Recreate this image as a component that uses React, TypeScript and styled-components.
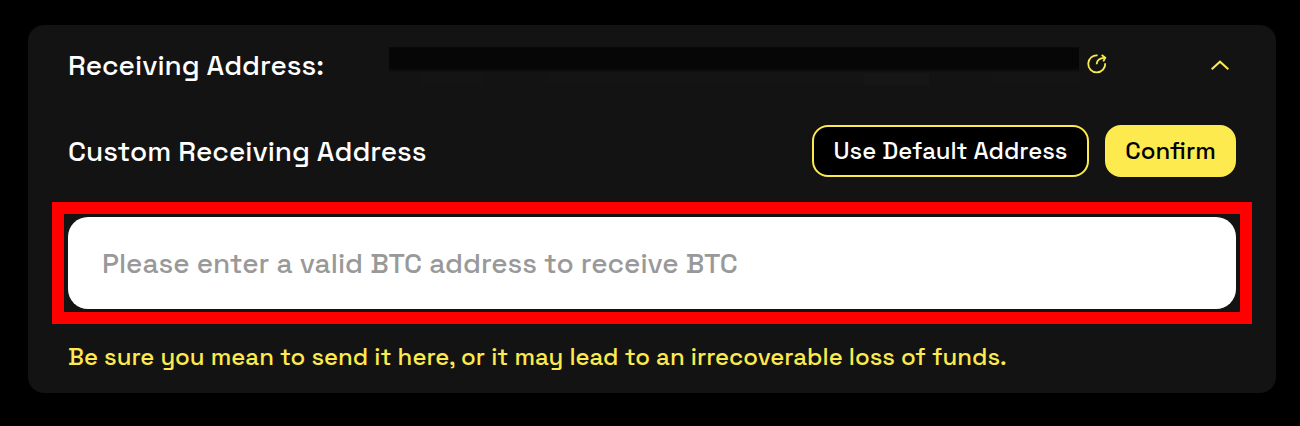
import React from "react";
import styled, { createGlobalStyle } from "styled-components";

const yellow = "#fcea4e";

const GlobalStyle = createGlobalStyle`
  *, *::before, *::after { box-sizing: border-box; }
  body {
    margin: 0;
    background: #000;
    font-family: "Space Grotesk", Inter, sans-serif;
    font-weight: 500;
  }
`;

const Page = styled.main`
  height: 426px;
  padding: 25px 24px 33px 28px;
  background: #000;
`;

const Panel = styled.section`
  height: 368px;
  padding: 0 40px;
  border-radius: 16px;
  background: #131313;
  color: #fff;
`;

const HeaderRow = styled.header`
  display: flex;
  height: 80px;
`;

const Title = styled.div<{ $width?: number }>`
  width: ${(p) => (p.$width ? `${p.$width}px` : "auto")};
  flex: none;
  align-self: center;
  font-size: 28px;
  line-height: 36px;
  white-space: nowrap;
`;

const HiddenAddress = styled.div`
  width: 690px;
  margin-top: 22px;
`;

const Mask = styled.div`
  height: 26px;
  background: linear-gradient(#0c0c0c 0, #060606 1px, #060606 21px, #0b0b0b 23px, #131313 25px);
`;

const Residue = styled.div`
  display: flex;
  height: 12px;
`;

const Patch = styled.span<{ $width: number; $color?: string }>`
  width: ${(p) => p.$width}px;
  background: ${(p) => p.$color ?? "transparent"};
`;

const LinkIcon = styled.svg`
  width: 22px;
  height: 22px;
  margin: 28px 0 0 7px;
`;

const Chevron = styled.svg`
  width: 20px;
  height: 12px;
  margin: 34px 6px 0 auto;
`;

const ActionRow = styled.div`
  display: flex;
  align-items: center;
  justify-content: space-between;
  height: 52px;
  margin-top: 20px;
`;

const Actions = styled.div`
  display: flex;
  gap: 16px;
`;

const Button = styled.button<{ $primary?: boolean; $width: number }>`
  width: ${(p) => p.$width}px;
  height: 52px;
  padding: 0;
  border: 2px solid ${yellow};
  border-radius: 16px;
  background: ${(p) => (p.$primary ? yellow : "#000")};
  color: ${(p) => (p.$primary ? "#000" : "#fff")};
  font: 500 24px/30px "Space Grotesk", Inter, sans-serif;
  white-space: nowrap;
`;

const Highlight = styled.div`
  margin: 25px -16px 0;
  padding: 3px 4px;
  border: 12px solid #f00;
`;

const AddressInput = styled.input`
  display: block;
  width: 100%;
  height: 92px;
  padding: 0 34px;
  border: 0;
  border-radius: 20px;
  background: #fff;
  color: #131313;
  font: 500 28px/36px "Space Grotesk", Inter, sans-serif;
  outline: none;

  &::placeholder {
    color: #999;
    opacity: 1;
  }
`;

const Warning = styled.p`
  margin: 17px 0 0;
  color: ${yellow};
  font-size: 24px;
  line-height: 32px;
  white-space: nowrap;
`;

export default function App() {
  return (
    <>
      <GlobalStyle />
      <Page>
        <Panel>
          <HeaderRow>
            <Title $width={321}>Receiving Address:</Title>
            <HiddenAddress>
              <Mask />
              <Residue>
                <Patch $width={32} />
                <Patch $width={63} $color="#141414" />
                <Patch $width={62} />
                <Patch $width={318} $color="#141414" />
                <Patch $width={65} $color="#161616" />
                <Patch $width={62} />
                <Patch $width={88} $color="#141414" />
              </Residue>
            </HiddenAddress>
            <LinkIcon viewBox="0 0 22 22" fill="none" stroke={yellow} strokeWidth="1.8">
              <path d="M11.6 2.4A8.5 8.5 0 1 0 19.2 10.2" />
              <path d="M10.6 11.2C10.8 7.8 13.2 5.2 18.6 4.9" />
              <path d="M15.7 2L19.3 4.8L17.3 8.4" />
            </LinkIcon>
            <Chevron viewBox="0 0 20 12" fill="none" stroke={yellow} strokeWidth="2">
              <path d="M1.7 10.3L10 2.7L18.3 10.3" />
            </Chevron>
          </HeaderRow>
          <ActionRow>
            <Title>Custom Receiving Address</Title>
            <Actions>
              <Button $width={277}>Use Default Address</Button>
              <Button $width={131} $primary>Confirm</Button>
            </Actions>
          </ActionRow>
          <Highlight>
            <AddressInput placeholder="Please enter a valid BTC address to receive BTC" />
          </Highlight>
          <Warning>Be sure you mean to send it here, or it may lead to an irrecoverable loss of funds.</Warning>
        </Panel>
      </Page>
    </>
  );
}
